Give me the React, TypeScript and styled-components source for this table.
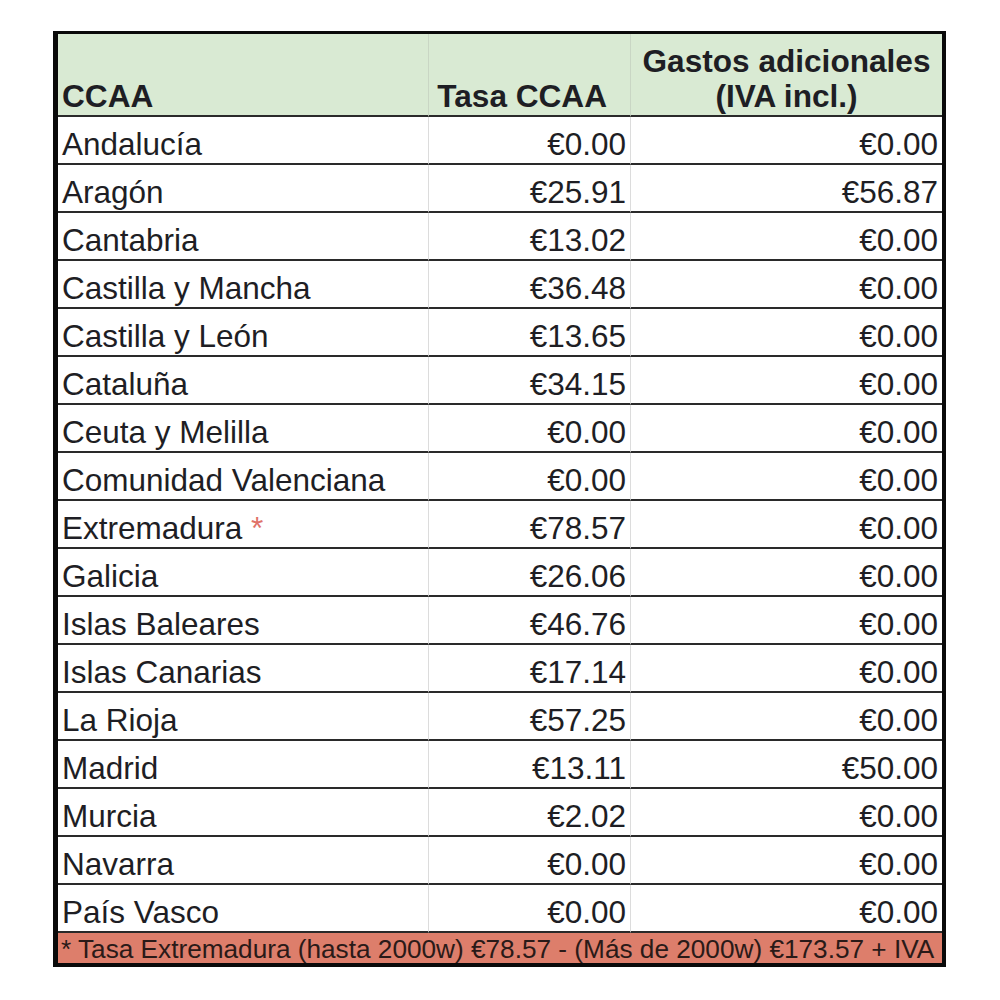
import React from "react";
import styled, { createGlobalStyle } from "styled-components";

const Global = createGlobalStyle`
  html, body { margin: 0; padding: 0; background: #ffffff; }
  body { font-family: "Liberation Sans", Arial, sans-serif; color: #1e1e24; }
`;

const Page = styled.div`
  padding: 31px 0 0 53px;
`;

const Table = styled.div`
  width: 884px;
  border-left: 5px solid #0a0a0a;
  border-right: 4px solid #0a0a0a;
  border-top: 3px solid #0a0a0a;
  border-bottom: 4px solid #0a0a0a;
  display: grid;
  grid-template-columns: 370px 202px 312px;
`;

const HeadCell = styled.div<{ $align: "left" | "right" | "center"; $padRight?: number }>`
  background: #d9ead3;
  border-bottom: 2px solid #2a2a2a;
  border-left: ${(p) => (p.$align === "left" ? "none" : "1px solid #c9d6c4")};
  display: flex;
  flex-direction: column;
  justify-content: flex-end;
  text-align: ${(p) => p.$align};
  padding: 0 ${(p) => p.$padRight ?? 4}px 1px 4px;
  font-size: 31.6px;
  font-weight: bold;
  line-height: 35px;
  color: #1e1e24;
  white-space: nowrap;
  box-sizing: border-box;
  height: 83px;
`;

const Cell = styled.div<{ $align: "left" | "right"; $first?: boolean }>`
  height: 48px;
  box-sizing: border-box;
  padding: 8px 4px 0 4px;
  line-height: 38px;
  font-size: 31.5px;
  border-bottom: 2px solid #2a2a2a;
  border-left: ${(p) => (p.$first ? "none" : "1px solid #dcdcdc")};
  text-align: ${(p) => p.$align};
  white-space: nowrap;
  overflow: hidden;
  background: #ffffff;
  color: #1e1e24;
`;

const Star = styled.span`
  color: #e07268;
`;

const Footnote = styled.div`
  grid-column: 1 / -1;
  height: 30px;
  box-sizing: border-box;
  padding: 2px 0 0 3px;
  line-height: 28px;
  background: #dd7e6b;
  font-size: 26.2px;
  white-space: nowrap;
  color: #2a1a18;
`;

type Row = { name: string; tasa: string; gastos: string; star?: boolean };

const rows: Row[] = [
  { name: "Andalucía", tasa: "€0.00", gastos: "€0.00" },
  { name: "Aragón", tasa: "€25.91", gastos: "€56.87" },
  { name: "Cantabria", tasa: "€13.02", gastos: "€0.00" },
  { name: "Castilla y Mancha", tasa: "€36.48", gastos: "€0.00" },
  { name: "Castilla y León", tasa: "€13.65", gastos: "€0.00" },
  { name: "Cataluña", tasa: "€34.15", gastos: "€0.00" },
  { name: "Ceuta y Melilla", tasa: "€0.00", gastos: "€0.00" },
  { name: "Comunidad Valenciana", tasa: "€0.00", gastos: "€0.00" },
  { name: "Extremadura", tasa: "€78.57", gastos: "€0.00", star: true },
  { name: "Galicia", tasa: "€26.06", gastos: "€0.00" },
  { name: "Islas Baleares", tasa: "€46.76", gastos: "€0.00" },
  { name: "Islas Canarias", tasa: "€17.14", gastos: "€0.00" },
  { name: "La Rioja", tasa: "€57.25", gastos: "€0.00" },
  { name: "Madrid", tasa: "€13.11", gastos: "€50.00" },
  { name: "Murcia", tasa: "€2.02", gastos: "€0.00" },
  { name: "Navarra", tasa: "€0.00", gastos: "€0.00" },
  { name: "País Vasco", tasa: "€0.00", gastos: "€0.00" },
];

export default function App() {
  return (
    <>
      <Global />
      <Page>
        <Table>
          <HeadCell $align="left">CCAA</HeadCell>
          <HeadCell $align="right" $padRight={23}>Tasa CCAA</HeadCell>
          <HeadCell $align="center">
            <div>Gastos adicionales</div>
            <div>(IVA incl.)</div>
          </HeadCell>
          {rows.map((r) => (
            <React.Fragment key={r.name}>
              <Cell $align="left" $first>
                {r.name}
                {r.star && <Star> *</Star>}
              </Cell>
              <Cell $align="right">{r.tasa}</Cell>
              <Cell $align="right">{r.gastos}</Cell>
            </React.Fragment>
          ))}
          <Footnote>
            * Tasa Extremadura (hasta 2000w) €78.57 - (Más de 2000w) €173.57 + IVA
          </Footnote>
        </Table>
      </Page>
    </>
  );
}
